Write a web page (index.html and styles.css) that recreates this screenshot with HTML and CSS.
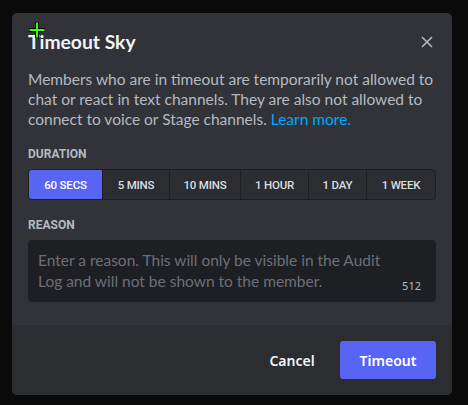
FILE: index.html
```html
<!DOCTYPE html>
<html>
<head>
<meta charset="utf-8">
<link rel="stylesheet" href="styles.css">
</head>
<body>
<div class="modal">
  <div class="body">
    <div class="header">
      <h1 class="title">Timeout Sky</h1>
      <button class="close" aria-label="Close">
        <svg width="12" height="12" viewBox="0 0 12 12"><path d="M1 1L11 11M11 1L1 11" stroke="#b5bac1" stroke-width="1.6" fill="none"/></svg>
      </button>
    </div>
    <p class="desc">Members who are in timeout are temporarily not allowed to chat or react in text channels. They are also not allowed to connect to voice or Stage channels. <a class="link">Learn more.</a></p>
    <div class="label">Duration</div>
    <div class="segments">
      <div class="seg active">60 SECS</div>
      <div class="seg">5 MINS</div>
      <div class="seg">10 MINS</div>
      <div class="seg">1 HOUR</div>
      <div class="seg">1 DAY</div>
      <div class="seg">1 WEEK</div>
    </div>
    <div class="label label-reason">Reason</div>
    <div class="textarea">
      <div class="placeholder">Enter a reason. This will only be visible in the Audit Log and will not be shown to the member.</div>
      <div class="count">512</div>
    </div>
  </div>
  <div class="footer">
    <button class="btn-cancel">Cancel</button>
    <button class="btn-primary">Timeout</button>
  </div>
</div>
<svg class="cursor" width="18" height="18" viewBox="0 0 18 18"><path d="M9 1V17M1 9H17" stroke="#000" stroke-width="4"/><path d="M9 1.5V16.5M1.5 9H16.5" stroke="#3cff00" stroke-width="2"/></svg>
</body>
</html>
```
FILE: styles.css
```css
html, body {
  margin: 0;
  padding: 0;
  background: #0a0a0a;
  width: 468px;
  height: 405px;
  overflow: hidden;
}
body {
  font-family: "Lato", "Noto Sans", sans-serif;
  position: relative;
}
.modal {
  margin: 13px 0 0 12px;
  width: 440px;
  height: 382px;
  background: #313338;
  border-radius: 5px;
  overflow: hidden;
  display: flex;
  flex-direction: column;
}
.body {
  padding: 0 16px;
  flex: 1;
}
.header {
  display: flex;
  justify-content: space-between;
  align-items: flex-start;
  padding-top: 17px;
}
.title {
  margin: 0;
  font-family: "Lato", sans-serif;
  font-size: 19.3px;
  line-height: 24px;
  font-weight: 700;
  color: #f2f3f5;
}
.close {
  background: none;
  border: 0;
  padding: 0;
  margin: 6px 3px 0 0;
  width: 12px;
  height: 12px;
  display: flex;
}
.desc {
  margin: 15px 0 0;
  font-size: 15.5px;
  line-height: 20px;
  color: #b5bac1;
}
.link {
  color: #00a8fc;
}
.label {
  margin-top: 17px;
  font-family: "Roboto", sans-serif;
  font-size: 12px;
  line-height: 16px;
  font-weight: 700;
  color: #b5bac1;
  text-transform: uppercase;
}
.segments {
  margin-top: 7px;
  display: flex;
  height: 29px;
  border: 1px solid #1e1f22;
  border-radius: 4px;
  overflow: hidden;
  background: #2b2d31;
}
.seg {
  box-sizing: border-box;
  display: flex;
  align-items: center;
  justify-content: center;
  font-family: "Roboto", sans-serif;
  font-size: 11.5px;
  font-weight: 500;
  letter-spacing: -0.2px;
  color: #dbdee1;
  border-left: 1px solid #1e1f22;
}
.seg:first-child { border-left: 0; }
.seg:nth-child(1) { width: 73px; }
.seg:nth-child(2) { width: 67px; }
.seg:nth-child(3) { width: 71px; }
.seg:nth-child(4) { width: 68px; }
.seg:nth-child(5) { width: 58px; }
.seg:nth-child(6) { flex: 1; }
.seg.active {
  background: #5865f2;
  color: #fff;
}
.label-reason {
  margin-top: 17px;
}
.textarea {
  margin-top: 7px;
  height: 62px;
  background: #1e1f22;
  border-radius: 4px;
  position: relative;
  box-sizing: border-box;
  padding: 10px 10px;
}
.placeholder {
  font-size: 15.5px;
  line-height: 21px;
  color: #6d6f78;
  width: 360px;
}
.count {
  position: absolute;
  right: 15px;
  bottom: 9px;
  font-family: "Noto Sans", sans-serif;
  font-size: 11px;
  line-height: 14px;
  color: #b5bac1;
}
.footer {
  height: 70px;
  background: #2b2d31;
  display: flex;
  justify-content: flex-end;
  align-items: center;
  padding: 0 16px;
}
button {
  font-family: "Noto Sans", sans-serif;
  cursor: pointer;
}
.btn-cancel {
  width: 96px;
  height: 38px;
  background: none;
  border: 0;
  color: #f2f3f5;
  font-size: 14px;
  font-weight: 600;
}
.btn-primary {
  width: 96px;
  height: 38px;
  background: #5865f2;
  border: 0;
  border-radius: 3px;
  color: #fff;
  font-size: 14px;
  font-weight: 600;
}
.cursor {
  position: absolute;
  left: 28px;
  top: 21px;
}
```
